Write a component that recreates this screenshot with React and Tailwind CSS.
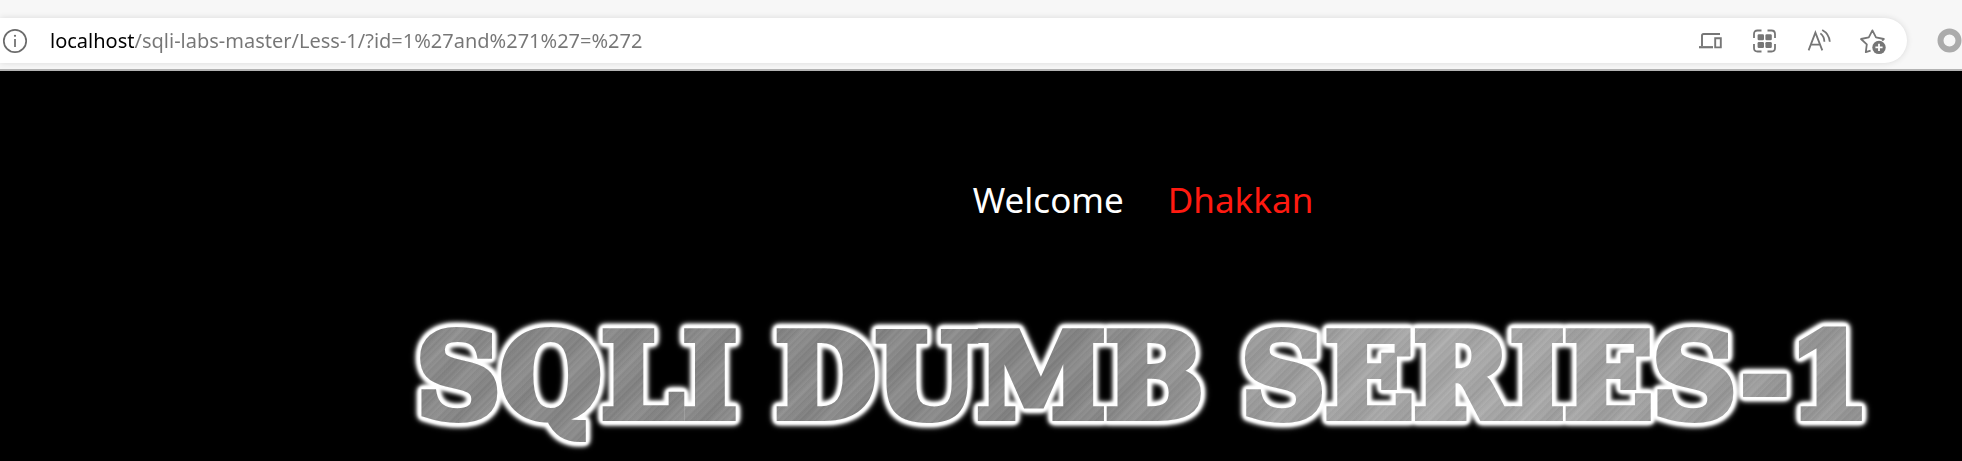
import React from "react";

function InfoIcon() {
  return (
    <svg width="26" height="26" viewBox="0 0 26 26" fill="none" stroke="#6b6b6b" aria-hidden="true">
      <circle cx="13" cy="13" r="11.2" strokeWidth="1.7" />
      <path d="M13 11v8" strokeWidth="1.7" />
      <circle cx="13" cy="7.8" r="1.1" fill="#6b6b6b" stroke="none" />
    </svg>
  );
}

function DevicesIcon() {
  return (
    <svg width="26" height="26" viewBox="0 0 26 26" fill="none" stroke="#767676" strokeWidth="1.9" aria-hidden="true">
      <path d="M4 18V7.6Q4 6 5.6 6H22" />
      <path d="M1 19.2h14" strokeWidth="2.2" />
      <path d="M17.2 10.2h5.6v9.2h-5.6z" />
    </svg>
  );
}

function AppsIcon() {
  return (
    <svg width="26" height="26" viewBox="0 0 26 26" fill="none" stroke="#767676" strokeWidth="1.8" aria-hidden="true">
      <path d="M9.5 2.5h-4Q2 2.5 2 6v4M15.5 2.5h4Q23 2.5 23 6v4M23 16v4q0 3.500-3.500 3.500h-4M9.500 23.500h-4Q2 23.500 2 20v-4" />
      <g fill="#767676" stroke="none">
        <rect x="5.6" y="6.2" width="6.4" height="6" rx="1.2" />
        <rect x="13.4" y="6.2" width="6.4" height="6" rx="1.2" />
        <rect x="5.6" y="14" width="6.4" height="6" rx="1.2" />
        <rect x="13.4" y="14" width="6.4" height="6" rx="1.2" />
      </g>
    </svg>
  );
}

function ReadAloudIcon() {
  return (
    <svg width="26" height="26" viewBox="0 0 26 26" fill="none" stroke="#767676" strokeWidth="1.8" aria-hidden="true">
      <path d="M2.6 22.4 9.4 4.6l6.9 17.8M5 16.6h9" />
      <path d="M14.4 5.4q3.8 2.8 4 8.4M16.2 2q7 3.8 7.6 11.8" />
    </svg>
  );
}

function FavoriteIcon() {
  return (
    <svg width="28" height="28" viewBox="0 0 28 28" fill="none" stroke="#767676" strokeWidth="1.8" strokeLinejoin="round" aria-hidden="true">
      <path d="M11.6 23.6 6.8 25.2l1-7.8L2 12l7.8-1.6L13.4 3.4 17 10.4 24.8 12l-1.6 1.6" />
      <circle cx="20" cy="20.4" r="6.7" fill="#767676" stroke="none" />
      <path d="M20 16.8v7.2M16.4 20.4h7.2" stroke="#fff" />
    </svg>
  );
}

function IconButton({ label, children }) {
  return (
    <button type="button" aria-label={label} className="flex size-7 items-center justify-center">
      {children}
    </button>
  );
}

function Toolbar() {
  return (
    <header className="flex items-center justify-between border-b-2 border-[#b3b3b3] bg-[#f7f7f7] pt-[18px] pb-[6px]">
      <div className="flex h-[45px] flex-1 items-center rounded-r-full bg-white pr-5 shadow-[0_0_6px_rgba(0,0,0,0.12)]">
        <button type="button" aria-label="View site information" className="ml-[2px] flex">
          <InfoIcon />
        </button>
        <input
          type="text"
          aria-label="Address"
          readOnly
          value="localhost/sqli-labs-master/Less-1/?id=1%27and%271%27=%272"
          className="ml-[22px] flex-1 bg-[linear-gradient(90deg,#000_84px,#767676_84px)] bg-clip-text font-['Noto_Sans',sans-serif] text-[20px] leading-7 text-transparent outline-none"
        />
        <div className="flex gap-[26px]">
          <IconButton label="Send to devices"><DevicesIcon /></IconButton>
          <IconButton label="Apps"><AppsIcon /></IconButton>
          <IconButton label="Read aloud"><ReadAloudIcon /></IconButton>
          <IconButton label="Add to favorites"><FavoriteIcon /></IconButton>
        </div>
      </div>
      <button type="button" aria-label="Profile" className="ml-[30px] flex">
        <svg width="25" height="25" viewBox="0 0 25 25" fill="none" aria-hidden="true">
          <circle cx="12.5" cy="12.5" r="9" stroke="#ababab" strokeWidth="6" />
        </svg>
      </button>
    </header>
  );
}

const metal =
  "bg-[repeating-linear-gradient(135deg,rgba(255,255,255,0.05)_0px,rgba(0,0,0,0.04)_2px,rgba(255,255,255,0.03)_5px,rgba(0,0,0,0.04)_6px,rgba(255,255,255,0.05)_11px),repeating-linear-gradient(132deg,rgba(0,0,0,0.06)_0px,rgba(255,255,255,0.06)_17px,rgba(0,0,0,0.06)_37px),linear-gradient(90deg,#8c8c8c_0%,#888_45%,#a0a0a0_58%,#acacac_72%,#989898_100%)] bg-clip-text text-transparent";

export default function App() {
  return (
    <div className="min-h-screen overflow-hidden bg-black">
      <Toolbar />
      <main className="flex flex-col items-center pl-[324px] font-['Noto_Sans',sans-serif]">
        <p className="mt-[105px] flex gap-[44px] text-[35px] leading-[48px] text-white">
          <span>Welcome</span>
          <span className="text-[#ff1a10]">Dhakkan</span>
        </p>
        <h1 className="mt-[82px] [filter:drop-shadow(0_0_1px_#fff)_drop-shadow(0_0_1px_#fff)_drop-shadow(0_0_1px_#fff)_drop-shadow(0_0_1px_#fff)_drop-shadow(0_0_1px_#fff)_drop-shadow(0_0_2px_#fff)_drop-shadow(0_0_2px_#fff)]">
          <span className={`${metal} flex gap-[38px] px-2 font-['DejaVu_Serif',serif] text-[116px] leading-[140px] font-bold whitespace-nowrap [-webkit-text-stroke:8px_transparent]`}>
            <span>SQLI</span> <span>DUMB</span> <span>SERIES-1</span>
          </span>
        </h1>
      </main>
    </div>
  );
}
